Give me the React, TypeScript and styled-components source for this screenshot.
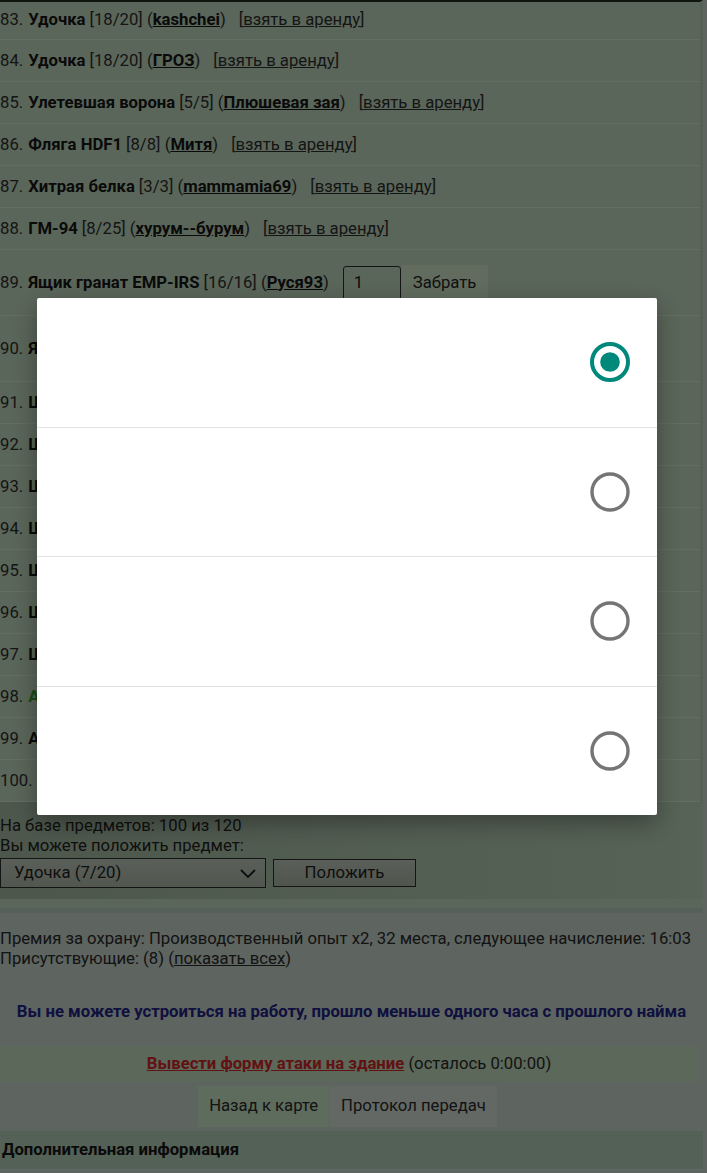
import React, { useState } from 'react'
import styled, { createGlobalStyle } from 'styled-components'

const GlobalStyle = createGlobalStyle`
    html, body {
        margin: 0;
        padding: 0;
        background: #bcc8c0;
    }
    body {
        font-family: Roboto, "Noto Sans", "Liberation Sans", sans-serif;
        font-size: 16.7px;
        line-height: 20px;
        color: #222;
    }
`

interface Item {
    n: number
    name: string
    count: string
    owner: string
    action: 'rent' | 'take'
    green?: boolean
}

const items: Item[] = [
    { n: 83, name: 'Удочка', count: '[18/20]', owner: 'kashchei', action: 'rent' },
    { n: 84, name: 'Удочка', count: '[18/20]', owner: 'ГРОЗ', action: 'rent' },
    { n: 85, name: 'Улетевшая ворона', count: '[5/5]', owner: 'Плюшевая зая', action: 'rent' },
    { n: 86, name: 'Фляга HDF1', count: '[8/8]', owner: 'Митя', action: 'rent' },
    { n: 87, name: 'Хитрая белка', count: '[3/3]', owner: 'mammamia69', action: 'rent' },
    { n: 88, name: 'ГМ-94', count: '[8/25]', owner: 'хурум--бурум', action: 'rent' },
    { n: 89, name: 'Ящик гранат EMP-IRS', count: '[16/16]', owner: 'Руся93', action: 'take' },
    { n: 90, name: 'Ящик гранат EMP-IRS', count: '[12/16]', owner: 'Руся93', action: 'take' },
    { n: 91, name: 'Шлем «Сфера»', count: '[40/40]', owner: 'kashchei', action: 'rent' },
    { n: 92, name: 'Шлем «Сфера»', count: '[38/40]', owner: 'ГРОЗ', action: 'rent' },
    { n: 93, name: 'Шлем «Сфера»', count: '[35/40]', owner: 'Митя', action: 'rent' },
    { n: 94, name: 'Шлем «Сфера»', count: '[40/40]', owner: 'Руся93', action: 'rent' },
    { n: 95, name: 'Шахтёрская каска', count: '[20/20]', owner: 'mammamia69', action: 'rent' },
    { n: 96, name: 'Шахтёрская каска', count: '[17/20]', owner: 'хурум--бурум', action: 'rent' },
    { n: 97, name: 'Шахтёрская каска', count: '[20/20]', owner: 'Плюшевая зая', action: 'rent' },
    { n: 98, name: 'Аптечка', count: '[5/5]', owner: 'ГРОЗ', action: 'rent', green: true },
    { n: 99, name: 'Аптечка', count: '[3/5]', owner: 'Митя', action: 'rent' },
    { n: 100, name: 'Бинт', count: '[10/10]', owner: 'kashchei', action: 'rent' },
]

const Page = styled.div`
    width: 703px;
`

const ItemTable = styled.div`
    background: #b6ccb4;
    border-top: 2px solid #1c2c1c;
    border-right: 3px solid #acc0aa;
`

const Row = styled.div<{ $tall?: boolean }>`
    display: flex;
    align-items: center;
    height: ${p => (p.$tall ? 65 : 41)}px;
    border-bottom: 1px solid #c4dcc2;
    white-space: nowrap;
    &:first-child {
        height: 38px;
        padding-bottom: 2px;
        box-sizing: border-box;
    }
`

const Num = styled.span`
    color: #2a2a2a;
    margin-right: 5px;
`

const Name = styled.b<{ $green?: boolean }>`
    color: ${p => (p.$green ? '#2c9a2c' : '#141414')};
    margin-right: 4px;
`

const Count = styled.span`
    color: #2a2a2a;
`

const Owner = styled.a`
    font-weight: bold;
    color: #141414;
    text-decoration: underline;
`

const Rent = styled.span`
    margin-left: 13px;
    color: #2a2a2a;
    a {
        color: #2a2a2a;
        text-decoration: underline;
    }
`

const QtyInput = styled.input`
    box-sizing: border-box;
    width: 58px;
    height: 34px;
    margin-left: 14px;
    padding: 0 10px;
    border: 1.5px solid #2a2a2a;
    border-radius: 3px;
    background: transparent;
    font: inherit;
    color: #141414;
`

const TakeButton = styled.button`
    height: 36px;
    padding: 0 12px;
    border: none;
    background: #c2d8bc;
    font: inherit;
    color: #222;
`

const PutForm = styled.div`
    background: linear-gradient(90deg, #9aae98, #a8bea6 60%, #aec6ac);
    padding: 14px 0 11px;
    color: #202020;
`

const PutControls = styled.div`
    display: flex;
    gap: 7px;
    margin-top: 2px;
`

const Select = styled.div`
    box-sizing: border-box;
    display: flex;
    align-items: center;
    justify-content: space-between;
    width: 266px;
    height: 30px;
    padding: 0 8px 0 13px;
    border: 1.5px solid #2a2a2a;
    background: linear-gradient(#b6beb2, #a4aea0);
    color: #1c1c1c;
`

const PutButton = styled.button`
    box-sizing: border-box;
    width: 143px;
    height: 28px;
    margin-top: 1px;
    border: 1.5px solid #2a2a2a;
    background: linear-gradient(#b6beb2, #a0aa9c);
    font: inherit;
    color: #1c1c1c;
`

const Spacer = styled.div`
    height: 9px;
    background: #b6ccb4;
`

const Rule = styled.div`
    height: 5px;
    background: #a8c0b0;
`

const Info = styled.div`
    padding: 16px 0 0;
    color: #262626;
    a {
        color: inherit;
        text-decoration: underline;
    }
`

const Notice = styled.div`
    padding: 33px 0 24px;
    text-align: center;
    font-weight: bold;
    color: #20207e;
`

const AttackBand = styled.div`
    margin-right: 5px;
    padding: 8px 0;
    background: #b6d0b4;
    text-align: center;
    color: #262626;
    a {
        color: #c42424;
        font-weight: bold;
        text-decoration: underline;
    }
`

const NavRow = styled.div`
    display: flex;
    justify-content: center;
    gap: 1px;
    margin-right: 8px;
    padding: 4px 0;
`

const NavButton = styled.div<{ $alt?: boolean }>`
    padding: 10px 11px 11px;
    background: ${p => (p.$alt ? '#c8d0ca' : '#bcd8bc')};
    color: #262626;
`

const SectionHeader = styled.div`
    padding: 9px 2px;
    background: #a8c2ac;
    border-bottom: 1px solid #c6d2ca;
    font-weight: bold;
    color: #141414;
`

const Overlay = styled.div`
    position: fixed;
    inset: 0;
    background: rgba(0, 0, 0, 0.5);
`

const Dialog = styled.div`
    position: fixed;
    top: 298px;
    left: 37px;
    width: 620px;
    height: 517px;
    display: flex;
    flex-direction: column;
    background: #fff;
    border-radius: 2px;
    box-shadow: 0 8px 24px rgba(0, 0, 0, 0.35);
`

const Option = styled.label`
    flex: 1;
    display: flex;
    align-items: center;
    justify-content: flex-end;
    padding-right: 26px;
    border-bottom: 1px solid #e2e2e2;
    cursor: pointer;
    &:last-child {
        border-bottom: none;
    }
`

const Radio: React.FC<{ checked: boolean }> = ({ checked }) => (
    <svg width="42" height="42" viewBox="0 0 42 42">
        <circle
            cx="21"
            cy="21"
            r="18"
            fill="none"
            stroke={checked ? '#00897b' : '#757575'}
            strokeWidth={checked ? 4 : 3.4}
        />
        {checked && <circle cx="21" cy="21" r="9.8" fill="#00897b" />}
    </svg>
)

const ItemRow: React.FC<{ item: Item }> = ({ item }) => (
    <Row $tall={item.action === 'take'}>
        <Num>{item.n}.</Num>
        <Name $green={item.green}>{item.name}</Name>
        <Count>{item.count} (</Count>
        <Owner>{item.owner}</Owner>
        <Count>)</Count>
        {item.action === 'rent' ? (
            <Rent>
                [<a>взять в аренду</a>]
            </Rent>
        ) : (
            <>
                <QtyInput defaultValue="1" />
                <TakeButton>Забрать</TakeButton>
            </>
        )}
    </Row>
)

const App: React.FC = () => {
    const [choice, setChoice] = useState(0)

    return (
        <>
            <GlobalStyle />
            <Page>
                <ItemTable>
                    {items.map(item => (
                        <ItemRow key={item.n} item={item} />
                    ))}
                </ItemTable>
                <PutForm>
                    <div>На базе предметов: 100 из 120</div>
                    <div>Вы можете положить предмет:</div>
                    <PutControls>
                        <Select>
                            <span>Удочка (7/20)</span>
                            <svg width="18" height="12" viewBox="0 0 18 12">
                                <path d="M2 3l7 7 7-7" fill="none" stroke="#1c1c1c" strokeWidth="1.8" />
                            </svg>
                        </Select>
                        <PutButton>Положить</PutButton>
                    </PutControls>
                </PutForm>
                <Spacer />
                <Rule />
                <Info>
                    <div>Премия за охрану: Производственный опыт x2, 32 места, следующее начисление: 16:03</div>
                    <div>
                        Присутствующие: (8) (<a>показать всех</a>)
                    </div>
                </Info>
                <Notice>Вы не можете устроиться на работу, прошло меньше одного часа с прошлого найма</Notice>
                <AttackBand>
                    <a>Вывести форму атаки на здание</a> (осталось 0:00:00)
                </AttackBand>
                <NavRow>
                    <NavButton>Назад к карте</NavButton>
                    <NavButton $alt>Протокол передач</NavButton>
                </NavRow>
                <SectionHeader>Дополнительная информация</SectionHeader>
            </Page>
            <Overlay />
            <Dialog>
                {[0, 1, 2, 3].map(i => (
                    <Option key={i} onClick={() => setChoice(i)}>
                        <Radio checked={choice === i} />
                    </Option>
                ))}
            </Dialog>
        </>
    )
}

export default App
